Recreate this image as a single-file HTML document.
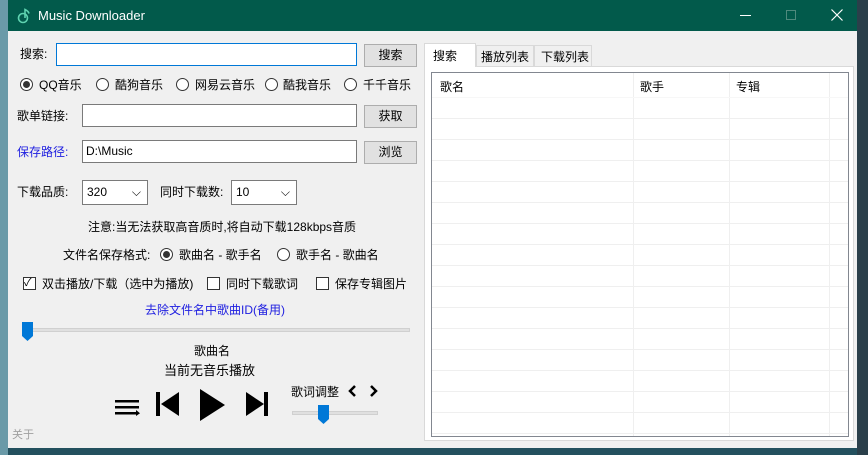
<!DOCTYPE html><html><head><meta charset="utf-8"><style>
*{margin:0;padding:0;box-sizing:border-box}
body{width:868px;height:455px;overflow:hidden;background:#23505e;font-family:"Liberation Sans","Noto Sans CJK SC",sans-serif;font-size:12px;color:#000;position:relative}
.a{position:absolute}
.win{left:8px;top:0;width:849px;height:448px;background:#f0f0f0}
.title{left:8px;top:0;width:849px;height:31px;background:#025a4b;color:#fff;font-size:13px}
.inp{background:#fff;border:1px solid #7a7a7a;height:23px}
.btn{background:#e1e1e1;border:1px solid #adadad;text-align:center;line-height:20px;height:23px;width:53px}
.rad{width:13px;height:13px;border:1px solid #333;border-radius:50%;background:#fff}
.rad.on::after{content:"";position:absolute;left:2px;top:2px;width:7px;height:7px;border-radius:50%;background:#333}
.chk{width:13px;height:13px;border:1px solid #333;background:#fff}
.sel{background:#fff;border:1px solid #7a7a7a;height:25px;line-height:23px;padding-left:4px}
.t{white-space:nowrap;line-height:14px}
</style></head><body>
<div class="a" style="left:0;top:0;width:8px;height:455px;background:#6a9aa8"></div>
<div class="a" style="left:857px;top:0;width:11px;height:455px;background:#2a3f4a"></div>
<div class="a win"></div>
<div class="a title">
<svg class="a" style="left:9px;top:8px" width="14" height="16" viewBox="0 0 14 16"><circle cx="6" cy="10" r="4.5" fill="none" stroke="#5fd3b0" stroke-width="1.6"/><path d="M8 10V1.5c2 1 3.5 2 4 4" fill="none" stroke="#5fd3b0" stroke-width="1.6"/></svg>
<div class="a t" style="left:30px;top:9px">Music Downloader</div>
<div class="a" style="left:732px;top:15px;width:11px;height:1px;background:#fff"></div>
<div class="a" style="left:778px;top:10px;width:10px;height:10px;border:1px solid #4f8a7d"></div>
<svg class="a" style="left:823px;top:9px" width="12" height="12"><path d="M0.5 0.5L11.5 11.5M11.5 0.5L0.5 11.5" stroke="#fff" stroke-width="1.2"/></svg>
</div>
<div class="a t" style="left:20px;top:47px">搜索:</div>
<div class="a inp" style="left:56px;top:43px;width:301px;border-color:#0078d7"></div>
<div class="a btn" style="left:364px;top:44px">搜索</div>
<div class="a rad on" style="left:20px;top:78px"></div><div class="a t" style="left:39px;top:78px">QQ音乐</div>
<div class="a rad" style="left:96px;top:78px"></div><div class="a t" style="left:115px;top:78px">酷狗音乐</div>
<div class="a rad" style="left:176px;top:78px"></div><div class="a t" style="left:195px;top:78px">网易云音乐</div>
<div class="a rad" style="left:265px;top:78px"></div><div class="a t" style="left:283px;top:78px">酷我音乐</div>
<div class="a rad" style="left:344px;top:78px"></div><div class="a t" style="left:363px;top:78px">千千音乐</div>
<div class="a t" style="left:17px;top:109px">歌单链接:</div>
<div class="a inp" style="left:82px;top:104px;width:275px"></div>
<div class="a btn" style="left:364px;top:105px">获取</div>
<div class="a t" style="left:17px;top:145px;color:#2020e0">保存路径:</div>
<div class="a inp" style="left:82px;top:140px;width:275px;padding-left:3px;line-height:21px">D:\Music</div>
<div class="a btn" style="left:364px;top:141px">浏览</div>
<div class="a t" style="left:17px;top:185px">下载品质:</div>
<div class="a sel" style="left:82px;top:180px;width:66px">320<span class="a" style="right:6px;top:0">⌵</span></div>
<div class="a t" style="left:160px;top:185px">同时下载数:</div>
<div class="a sel" style="left:231px;top:180px;width:66px">10<span class="a" style="right:6px;top:0">⌵</span></div>
<div class="a t" style="left:88px;top:220px">注意:当无法获取高音质时,将自动下载128kbps音质</div>
<div class="a t" style="left:63px;top:248px">文件名保存格式:</div>
<div class="a rad on" style="left:160px;top:248px"></div><div class="a t" style="left:179px;top:248px">歌曲名 - 歌手名</div>
<div class="a rad" style="left:277px;top:248px"></div><div class="a t" style="left:296px;top:248px">歌手名 - 歌曲名</div>
<div class="a chk" style="left:23px;top:277px"></div><div class="a t" style="left:24px;top:276px;font-size:11px">✓</div>
<div class="a t" style="left:42px;top:277px">双击播放/下载（选中为播放)</div>
<div class="a chk" style="left:207px;top:277px"></div><div class="a t" style="left:226px;top:277px">同时下载歌词</div>
<div class="a chk" style="left:316px;top:277px"></div><div class="a t" style="left:335px;top:277px">保存专辑图片</div>
<div class="a t" style="left:145px;top:303px;color:#2020e0">去除文件名中歌曲ID(备用)</div>
<div class="a" style="left:22px;top:328px;width:388px;height:4px;background:#e0e0e0;border:1px solid #d0d0d0"></div>
<svg class="a" style="left:22px;top:322px" width="11" height="20"><path d="M0 0H11V14L5.5 19L0 14Z" fill="#0078d7"/></svg>
<div class="a t" style="left:194px;top:344px">歌曲名</div>
<div class="a t" style="left:164px;top:364px;font-size:13px">当前无音乐播放</div>
<svg class="a" style="left:114px;top:388px" width="160" height="34">
<rect x="1" y="12" width="24" height="2.5"/><rect x="1" y="18" width="24" height="2.5"/><rect x="1" y="24" width="22" height="2.5"/><path d="M22 22L26 25.2L22 28Z"/>
<rect x="42" y="4" width="4" height="24"/><path d="M65 4V28L47 16Z"/>
<path d="M86 1V33L111 17Z"/>
<path d="M132 4V28L150 16Z"/><rect x="150" y="4" width="4" height="24"/>
</svg>
<div class="a t" style="left:291px;top:385px">歌词调整</div>
<svg class="a" style="left:347px;top:382px" width="32" height="18"><path d="M8 4L3 9L8 14M24 4L29 9L24 14" fill="none" stroke="#000" stroke-width="2.5"/></svg>
<div class="a" style="left:292px;top:411px;width:86px;height:4px;background:#e0e0e0;border:1px solid #d0d0d0"></div>
<svg class="a" style="left:318px;top:405px" width="11" height="19"><path d="M0 0H11V14L5.5 19L0 14Z" fill="#0078d7"/></svg>
<div class="a t" style="left:12px;top:428px;color:#a0a0a0;font-size:11px">关于</div>
<div class="a" style="left:424px;top:66px;width:430px;height:375px;background:#fff;border:1px solid #d9d9d9"></div>
<div class="a t" style="left:424px;top:43px;width:52px;height:24px;background:#fff;border:1px solid #d9d9d9;border-bottom:none;padding:5px 0 0 8px">搜索</div>
<div class="a t" style="left:476px;top:45px;width:58px;height:22px;background:#f0f0f0;border:1px solid #d9d9d9;padding:4px 0 0 4px">播放列表</div>
<div class="a t" style="left:534px;top:45px;width:58px;height:22px;background:#f0f0f0;border:1px solid #d9d9d9;padding:4px 0 0 6px">下载列表</div>
<div class="a" style="left:431px;top:72px;width:418px;height:365px;border:1px solid #828790;background:#fff;overflow:hidden">
<svg class="a" style="left:0;top:0" width="416" height="363">
<g stroke="#efefef" stroke-width="1">
<path d="M201.5 0V363M297.5 0V363M397.5 0V363"/>
<path d="M0 45.5H416M0 66.5H416M0 87.5H416M0 108.5H416M0 129.5H416M0 150.5H416M0 171.5H416M0 192.5H416M0 213.5H416M0 234.5H416M0 255.5H416M0 276.5H416M0 297.5H416M0 318.5H416M0 339.5H416M0 360.5H416"/>
</g>
<path d="M0 24.5H416" stroke="#f7f7f7"/>
</svg>
<div class="a t" style="left:8px;top:7px">歌名</div>
<div class="a t" style="left:208px;top:7px">歌手</div>
<div class="a t" style="left:304px;top:7px">专辑</div>
</div>
</body></html>
